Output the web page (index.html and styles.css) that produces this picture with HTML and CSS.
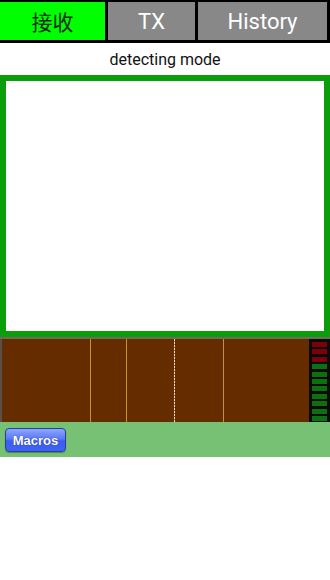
FILE: index.html
```html
<!DOCTYPE html>
<html>
<head>
<meta charset="utf-8">
<link rel="stylesheet" href="styles.css">
</head>
<body>
<div class="tabs">
  <div class="tab tab-rx">接收</div>
  <div class="tab tab-tx">TX</div>
  <div class="tab tab-hist">History</div>
</div>
<div class="status">detecting mode</div>
<div class="frame"></div>
<div class="waterfall">
  <div class="spectrum">
    <span class="marker" style="left:88px"></span>
    <span class="marker" style="left:124px"></span>
    <span class="marker dotted" style="left:172px"></span>
    <span class="marker" style="left:221px"></span>
  </div>
  <div class="meter">
    <span class="seg red"></span>
    <span class="seg red"></span>
    <span class="seg red"></span>
    <span class="seg grn"></span>
    <span class="seg grn"></span>
    <span class="seg grn"></span>
    <span class="seg grn"></span>
    <span class="seg grn"></span>
    <span class="seg grn"></span>
    <span class="seg grn"></span>
    <span class="seg grn"></span>
  </div>
</div>
<div class="toolbar">
  <button class="macros">Macros</button>
</div>
</body>
</html>
```
FILE: styles.css
```css
html, body {
  margin: 0;
  padding: 0;
  background: #ffffff;
  font-family: Roboto, "Noto Sans CJK SC", sans-serif;
}
.tabs {
  display: flex;
  height: 43px;
  box-sizing: border-box;
  background: #000;
  padding: 2px 3px 3px 0;
  gap: 3px;
}
.tab {
  display: flex;
  align-items: center;
  justify-content: center;
  font-size: 22px;
  color: #ffffff;
  background: #888888;
}
.tab-rx {
  width: 105px;
  background: #00ff00;
  color: #0a2a0a;
  font-family: "Noto Sans CJK SC", sans-serif;
  font-size: 21px;
}
.tab-tx { width: 87px; }
.tab-hist { flex: 1; }
.status {
  height: 32px;
  line-height: 34px;
  text-align: center;
  font-size: 16px;
  color: #111;
}
.frame {
  height: 262px;
  box-sizing: border-box;
  border: 6px solid #0a9e0a;
  background: #fff;
}
.waterfall {
  display: flex;
  height: 85px;
  box-sizing: border-box;
  border-top: 2px solid #6f6a5a;
  background: #652c00;
}
.spectrum {
  position: relative;
  flex: 1;
  border-left: 2px solid #5a5048;
}
.marker {
  position: absolute;
  top: 0;
  bottom: 0;
  width: 1px;
  background: #c8902e;
}
.marker.dotted {
  background: repeating-linear-gradient(to bottom, #e8d8c8 0 2px, #8a5a30 2px 3px);
}
.meter {
  width: 21px;
  background: #0a0a0a;
  display: flex;
  flex-direction: column;
  align-items: center;
  padding-top: 3px;
  gap: 2.4px;
  box-sizing: border-box;
}
.seg {
  width: 15px;
  height: 5px;
  flex: none;
}
.seg.red { background: #7c0008; }
.seg.grn { background: #0b7010; }
.toolbar {
  height: 35px;
  background: #76c173;
  padding: 6px 0 0 5px;
  box-sizing: border-box;
}
.macros {
  display: block;
  width: 61px;
  height: 24px;
  padding: 0;
  border: 1px solid #2a3f9a;
  border-radius: 4px;
  background: linear-gradient(to bottom, #8fa6ff 0%, #5a78f6 45%, #3c5cf0 55%, #3f63f4 100%);
  color: #fff;
  font-family: "Liberation Sans", Arial, sans-serif;
  font-weight: bold;
  font-size: 13px;
  text-shadow: 0 0 1px #1a2a80;
  box-shadow: 0 1px 1px rgba(0,0,0,0.3);
}
```
